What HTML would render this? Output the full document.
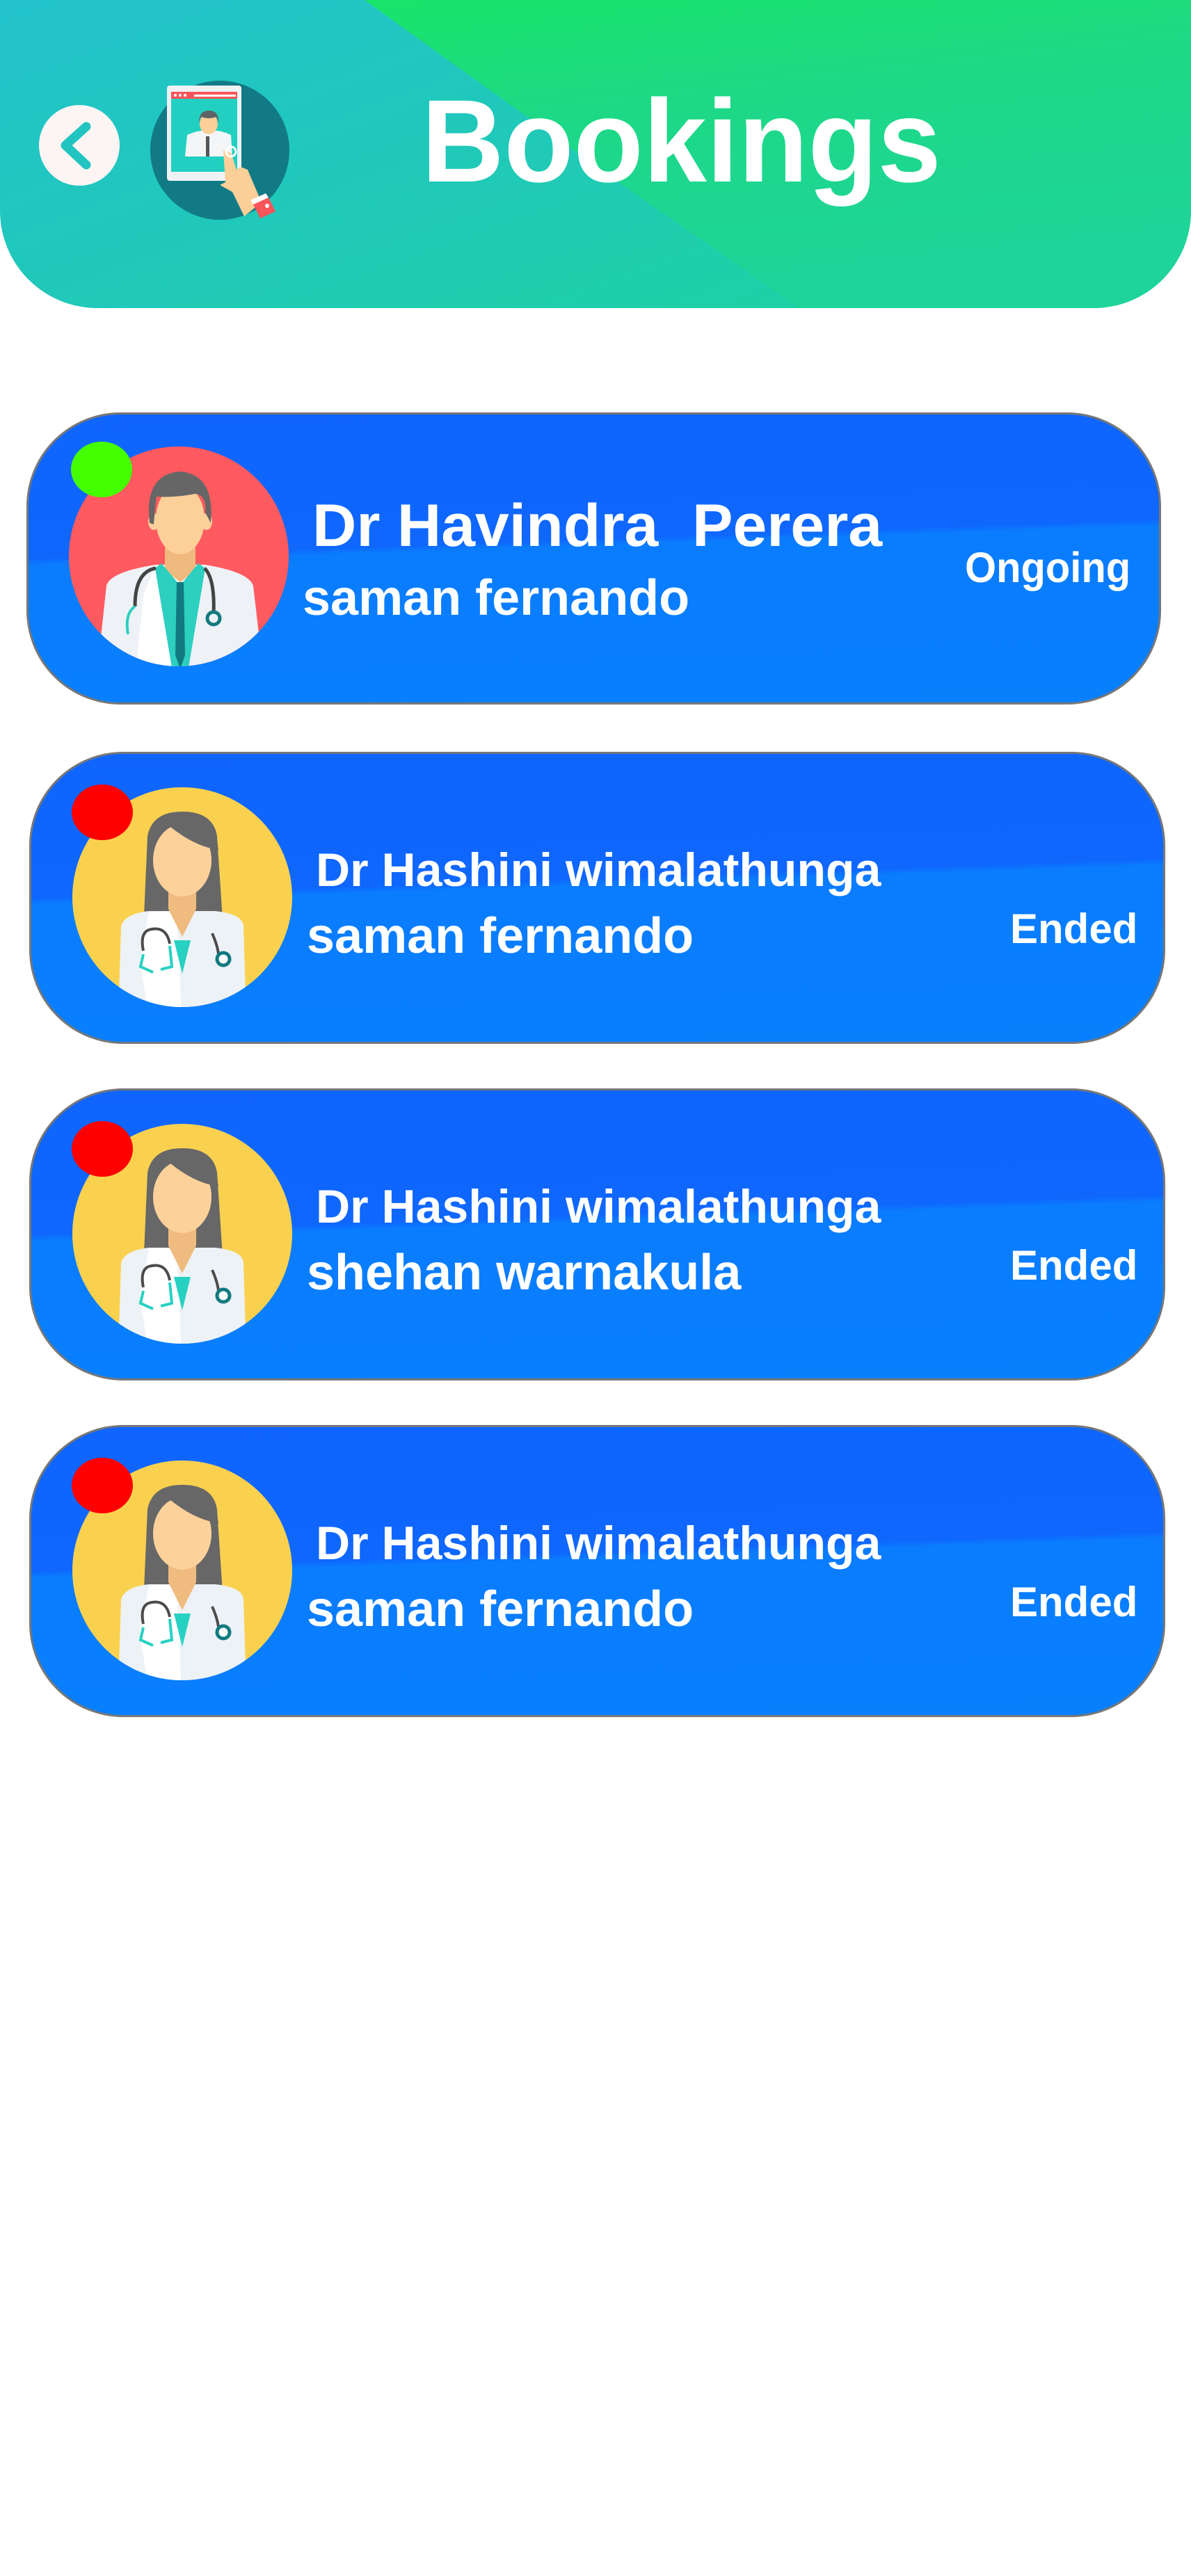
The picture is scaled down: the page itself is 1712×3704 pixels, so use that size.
<!DOCTYPE html>
<html><head><meta charset="utf-8"><style>
*{margin:0;padding:0;box-sizing:border-box}
body{width:1712px;height:3704px;background:#fff;position:relative;overflow:hidden;font-family:"Liberation Sans",Arial,sans-serif;font-weight:bold;color:#fff}
.hdr{position:absolute;left:0;top:0;width:1712px;height:443px;border-radius:0 0 140px 140px;overflow:hidden;background:linear-gradient(160deg,#22c3cc 0%,#20c9b8 45%,#1dd49a 100%)}
.t{position:absolute;white-space:nowrap;line-height:1}
.card{position:absolute;height:420px;border:3px solid #777;border-radius:135px;overflow:hidden;background:linear-gradient(178deg,#0f65fe 0%,#0f67fe 44%,#0a7cfe 46%,#0880fe 100%)}
.av{position:absolute;width:316px;height:316px}
.dot{position:absolute;width:88px;height:80px;border-radius:50%}
</style></head><body>
<div class="hdr">
<svg width="1712" height="443" style="position:absolute;left:0;top:0">
<defs><linearGradient id="gg" x1="0" y1="0" x2="0.3" y2="1"><stop offset="0" stop-color="#19e46a"/><stop offset="0.4" stop-color="#1dd985"/><stop offset="1" stop-color="#1ed49a"/></linearGradient></defs>
<polygon points="524,0 1712,0 1712,443 1150,443 873,251" fill="url(#gg)"/>
</svg>
<svg width="120" height="120" style="position:absolute;top:150px;left:55px">
<circle cx="59" cy="59" r="58" fill="#fdf5f4"/>
<polyline points="69,32 39,59 69,87" fill="none" stroke="#21c4c0" stroke-width="13" stroke-linecap="round" stroke-linejoin="round"/>
</svg>
<svg width="260" height="240" style="position:absolute;left:216px;top:116px">
<circle cx="100" cy="100" r="100" fill="#127a85"/>
<rect x="24" y="7" width="107" height="137" rx="4" fill="#eef2f5"/>
<rect x="30" y="16" width="95" height="115" fill="#21d0c0"/>
<rect x="30" y="16" width="95" height="10" fill="#f8555a"/>
<rect x="63" y="20" width="60" height="3" fill="#fff"/>
<circle cx="36" cy="21" r="2" fill="#fff"/><circle cx="43" cy="21" r="2" fill="#fff"/><circle cx="50" cy="21" r="2" fill="#fff"/>
<path d="M50 109 L53 78 Q70 70 84 72 Q100 70 116 78 L118 109Z" fill="#f3f5f7"/>
<rect x="80" y="80" width="5" height="29" fill="#555"/>
<ellipse cx="84" cy="62" rx="13" ry="15" fill="#fccf98"/>
<path d="M70 60 Q70 43 84 43 Q99 43 98 60 L95 52 Q84 56 73 52Z" fill="#5f6366"/>
<path d="M105 100 L116 104 L124 128 L130 124 L140 128 L145 140 L160 175 L135 195 L118 160 L100 150 L108 146Z" fill="#fccf98"/>
<path d="M148 178 L170 168 L180 188 L158 198Z" fill="#f8555a"/>
<path d="M144 172 L166 162 L170 168 L148 178Z" fill="#fff"/>
<circle cx="168" cy="180" r="3" fill="#fff"/>
<circle cx="116" cy="102" r="7" fill="none" stroke="#fff" stroke-width="3"/>
</svg>
<div class="t" style="left:606px;top:118px;font-size:169px;transform:scaleX(0.97);transform-origin:left">Bookings</div>
</div>

<!-- card 1 -->
<div class="card" style="left:38px;top:593px;width:1631px">
<div class="av" style="left:58px;top:46px"><svg width="316" height="316" viewBox="0 0 316 316">
<defs><clipPath id="c1"><circle cx="158" cy="158" r="158"/></clipPath></defs>
<circle cx="158" cy="158" r="158" fill="#fe5a5f"/>
<g clip-path="url(#c1)">
<path d="M40 330 L54 200 Q60 180 125 170 L195 170 Q258 180 265 200 L280 330Z" fill="#eef2f6"/>
<path d="M125 172 L162 175 L150 330 L95 330 L108 210Z" fill="#fff"/>
<path d="M138 145 L182 145 L182 178 L160 195 L138 178Z" fill="#f0b97d"/>
<path d="M133 168 L160 200 L186 168 L196 175 L170 330 L150 330 L124 175Z" fill="#2ccfc0"/>
<path d="M155 195 L165 195 L167 300 L160 320 L153 300Z" fill="#117a80"/>
<ellipse cx="160" cy="105" rx="35" ry="50" fill="#fdd09a"/>
<ellipse cx="122" cy="108" rx="8" ry="12" fill="#fdd09a"/><ellipse cx="198" cy="108" rx="8" ry="12" fill="#fdd09a"/>
<path d="M116 110 Q108 40 160 36 Q210 40 204 110 L196 95 Q198 70 182 68 Q150 74 126 72 Q124 88 122 112Z" fill="#666"/>
<path d="M125 175 Q95 180 95 230 M195 175 Q210 190 208 240" fill="none" stroke="#444" stroke-width="5"/>
<path d="M95 230 Q80 240 85 270" fill="none" stroke="#2ccfc0" stroke-width="4"/>
<circle cx="208" cy="247" r="9" fill="none" stroke="#117a80" stroke-width="5"/>
</g></svg></div>
<div class="dot" style="left:61px;top:39px;background:#44ff00"></div>
<div class="t" style="left:408px;top:117px;font-size:86px;transform:scaleX(1.02);transform-origin:left">Dr Havindra&nbsp; Perera</div>
<div class="t" style="left:394px;top:228px;font-size:72px">saman fernando</div>
<div class="t" style="left:1346px;top:190px;font-size:61px;transform:scaleX(0.95);transform-origin:left">Ongoing</div>
</div>

<!-- female cards -->
<div class="card" style="left:42px;top:1081px;width:1633px">
<div class="av" style="left:59px;top:48px"><svg width="316" height="316" viewBox="0 0 316 316">
<defs><clipPath id="c2"><circle cx="158" cy="158" r="158"/></clipPath></defs>
<circle cx="158" cy="158" r="158" fill="#fad14f"/>
<g clip-path="url(#c2)">
<path d="M103 185 L108 70 Q115 35 158 35 Q202 35 208 70 L216 190Z" fill="#676767"/>
<path d="M66 330 L70 200 Q75 182 110 178 L205 178 Q245 182 246 200 L250 330Z" fill="#edf2f6"/>
<path d="M110 180 L150 178 L157 330 L110 330 L97 250Z" fill="#fff"/>
<path d="M138 130 L178 130 L178 175 L158 215 L138 175Z" fill="#f0bb7f"/>
<path d="M146 220 L170 220 L158 268Z" fill="#27d1c1"/>
<ellipse cx="158" cy="105" rx="42" ry="52" fill="#fdd19a"/>
<path d="M116 90 Q130 58 140 56 Q175 85 210 90 Q205 50 158 45 Q118 48 116 90Z" fill="#676767"/>
<path d="M102 235 Q97 210 110 205 Q135 198 140 225 M201 210 Q212 235 210 250" fill="none" stroke="#4b4b4b" stroke-width="4"/>
<path d="M102 240 L98 258 L116 266 M140 228 L143 258 L127 262" fill="none" stroke="#27d1c1" stroke-width="4"/>
<circle cx="217" cy="247" r="9" fill="#fff" stroke="#117a80" stroke-width="5"/>
</g></svg></div>
<div class="dot" style="left:58px;top:44px;background:#fe0000"></div>
<div class="t" style="left:409px;top:133px;font-size:68px;transform:scaleX(1.0);transform-origin:left">Dr Hashini wimalathunga</div>
<div class="t" style="left:396px;top:226px;font-size:72px">saman fernando</div>
<div class="t" style="left:1407px;top:222px;font-size:60px">Ended</div>
</div>

<div class="card" style="left:42px;top:1565px;width:1633px">
<div class="av" style="left:59px;top:48px"><svg width="316" height="316" viewBox="0 0 316 316">
<defs><clipPath id="c3"><circle cx="158" cy="158" r="158"/></clipPath></defs>
<circle cx="158" cy="158" r="158" fill="#fad14f"/>
<g clip-path="url(#c3)">
<path d="M103 185 L108 70 Q115 35 158 35 Q202 35 208 70 L216 190Z" fill="#676767"/>
<path d="M66 330 L70 200 Q75 182 110 178 L205 178 Q245 182 246 200 L250 330Z" fill="#edf2f6"/>
<path d="M110 180 L150 178 L157 330 L110 330 L97 250Z" fill="#fff"/>
<path d="M138 130 L178 130 L178 175 L158 215 L138 175Z" fill="#f0bb7f"/>
<path d="M146 220 L170 220 L158 268Z" fill="#27d1c1"/>
<ellipse cx="158" cy="105" rx="42" ry="52" fill="#fdd19a"/>
<path d="M116 90 Q130 58 140 56 Q175 85 210 90 Q205 50 158 45 Q118 48 116 90Z" fill="#676767"/>
<path d="M102 235 Q97 210 110 205 Q135 198 140 225 M201 210 Q212 235 210 250" fill="none" stroke="#4b4b4b" stroke-width="4"/>
<path d="M102 240 L98 258 L116 266 M140 228 L143 258 L127 262" fill="none" stroke="#27d1c1" stroke-width="4"/>
<circle cx="217" cy="247" r="9" fill="#fff" stroke="#117a80" stroke-width="5"/>
</g></svg></div>
<div class="dot" style="left:58px;top:44px;background:#fe0000"></div>
<div class="t" style="left:409px;top:133px;font-size:68px;transform:scaleX(1.0);transform-origin:left">Dr Hashini wimalathunga</div>
<div class="t" style="left:396px;top:226px;font-size:72px">shehan warnakula</div>
<div class="t" style="left:1407px;top:222px;font-size:60px">Ended</div>
</div>

<div class="card" style="left:42px;top:2049px;width:1633px">
<div class="av" style="left:59px;top:48px"><svg width="316" height="316" viewBox="0 0 316 316">
<defs><clipPath id="c4"><circle cx="158" cy="158" r="158"/></clipPath></defs>
<circle cx="158" cy="158" r="158" fill="#fad14f"/>
<g clip-path="url(#c4)">
<path d="M103 185 L108 70 Q115 35 158 35 Q202 35 208 70 L216 190Z" fill="#676767"/>
<path d="M66 330 L70 200 Q75 182 110 178 L205 178 Q245 182 246 200 L250 330Z" fill="#edf2f6"/>
<path d="M110 180 L150 178 L157 330 L110 330 L97 250Z" fill="#fff"/>
<path d="M138 130 L178 130 L178 175 L158 215 L138 175Z" fill="#f0bb7f"/>
<path d="M146 220 L170 220 L158 268Z" fill="#27d1c1"/>
<ellipse cx="158" cy="105" rx="42" ry="52" fill="#fdd19a"/>
<path d="M116 90 Q130 58 140 56 Q175 85 210 90 Q205 50 158 45 Q118 48 116 90Z" fill="#676767"/>
<path d="M102 235 Q97 210 110 205 Q135 198 140 225 M201 210 Q212 235 210 250" fill="none" stroke="#4b4b4b" stroke-width="4"/>
<path d="M102 240 L98 258 L116 266 M140 228 L143 258 L127 262" fill="none" stroke="#27d1c1" stroke-width="4"/>
<circle cx="217" cy="247" r="9" fill="#fff" stroke="#117a80" stroke-width="5"/>
</g></svg></div>
<div class="dot" style="left:58px;top:44px;background:#fe0000"></div>
<div class="t" style="left:409px;top:133px;font-size:68px;transform:scaleX(1.0);transform-origin:left">Dr Hashini wimalathunga</div>
<div class="t" style="left:396px;top:226px;font-size:72px">saman fernando</div>
<div class="t" style="left:1407px;top:222px;font-size:60px">Ended</div>
</div>
</body></html>
